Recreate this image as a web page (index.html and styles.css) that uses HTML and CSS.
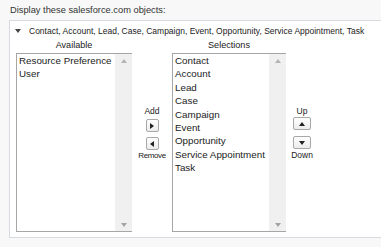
FILE: index.html
```html
<!DOCTYPE html>
<html>
<head>
<meta charset="utf-8">
<link rel="stylesheet" href="styles.css">
</head>
<body>
<div class="title">Display these salesforce.com objects:</div>
<div class="panel">
  <div class="summary"><span class="caret"></span>Contact, Account, Lead, Case, Campaign, Event, Opportunity, Service Appointment, Task</div>
  <div class="picker">
    <div class="colhead head-avail">Available</div>
    <div class="colhead head-sel">Selections</div>
    <div class="list list-avail">
      <div class="items">
        <div>Resource Preference</div>
        <div>User</div>
      </div>
      <div class="sb"><span class="sb-up"></span><span class="sb-down"></span></div>
    </div>
    <div class="mid">
      <div class="lbl">Add</div>
      <div class="btn small"><span class="tri-right"></span></div>
      <div class="btn small gap"><span class="tri-left"></span></div>
      <div class="lbl lbl-remove">Remove</div>
    </div>
    <div class="list list-sel">
      <div class="items">
        <div>Contact</div>
        <div>Account</div>
        <div>Lead</div>
        <div>Case</div>
        <div>Campaign</div>
        <div>Event</div>
        <div>Opportunity</div>
        <div>Service Appointment</div>
        <div>Task</div>
      </div>
      <div class="sb"><span class="sb-up"></span><span class="sb-down"></span></div>
    </div>
    <div class="ord">
      <div class="lbl">Up</div>
      <div class="btn wide"><span class="tri-up"></span></div>
      <div class="btn wide gap2"><span class="tri-down"></span></div>
      <div class="lbl">Down</div>
    </div>
  </div>
</div>
</body>
</html>
```
FILE: styles.css
```css
html, body {
  margin: 0;
  padding: 0;
  background: #f8f8f8;
  font-family: "Liberation Sans", Arial, sans-serif;
  color: #222;
}
.title {
  font-size: 9.3px;
  line-height: 12px;
  padding: 4px 0 0 10px;
  color: #333;
}
.panel {
  margin: 4px 0 0 9px;
  width: 380px;
  background: #fff;
  border: 1px solid #d6d9dd;
  border-right: none;
  padding-bottom: 5px;
}
.summary {
  font-size: 8.5px;
  line-height: 12px;
  margin-top: 4px;
  padding-left: 5px;
  display: flex;
  align-items: center;
  color: #222;
  white-space: nowrap;
}
.caret {
  width: 0;
  height: 0;
  border-left: 3px solid transparent;
  border-right: 3px solid transparent;
  border-top: 4px solid #444;
  margin-right: 8px;
}
.picker {
  display: grid;
  grid-template-columns: 116px 40px 114px 32px;
  grid-template-rows: 12px 179px;
  row-gap: 2px;
  margin: 2px 0 0 6px;
}
.colhead {
  font-size: 9.1px;
  line-height: 12px;
  text-align: center;
  grid-row: 1;
  color: #222;
}
.head-avail { grid-column: 1; }
.head-sel { grid-column: 3; }
.list {
  grid-row: 2;
  display: flex;
  border: 1px solid #a6a6a6;
  border-right: none;
  box-sizing: border-box;
  background: #fff;
}
.list-avail { grid-column: 1; }
.list-sel { grid-column: 3; }
.items {
  flex: 1;
  font-size: 9.8px;
  line-height: 13.4px;
  padding-left: 2px;
  white-space: nowrap;
  overflow: hidden;
  color: #222;
}
.sb {
  width: 17px;
  background: #f0f0f0;
  display: flex;
  flex-direction: column;
  justify-content: space-between;
  align-items: center;
  padding: 5px 0 4px;
}
.sb-up {
  width: 0; height: 0;
  border-left: 3.5px solid transparent;
  border-right: 3.5px solid transparent;
  border-bottom: 4px solid #b4b4b4;
}
.sb-down {
  width: 0; height: 0;
  border-left: 3.5px solid transparent;
  border-right: 3.5px solid transparent;
  border-top: 4px solid #a3a3a3;
}
.mid, .ord {
  grid-row: 2;
  display: flex;
  flex-direction: column;
  align-items: center;
  padding-top: 53px;
}
.mid { grid-column: 2; }
.ord { grid-column: 4; }
.lbl {
  font-size: 8.5px;
  line-height: 10px;
  color: #222;
}
.lbl-remove {
  letter-spacing: -0.4px;
  font-size: 8px;
}
.btn {
  box-sizing: border-box;
  border: 1px solid #a8a8a8;
  border-radius: 2px;
  background: linear-gradient(#ffffff, #ececec);
  display: flex;
  align-items: center;
  justify-content: center;
  margin-top: 3px;
}
.btn.small { width: 13px; height: 13px; }
.btn.wide { width: 18px; height: 13px; margin-top: 1px; }
.btn.gap { margin-top: 5px; margin-bottom: 1px; }
.btn.gap2 { margin-top: 6px; margin-bottom: 1px; }
.tri-right {
  width: 0; height: 0;
  border-top: 3px solid transparent;
  border-bottom: 3px solid transparent;
  border-left: 4px solid #222;
}
.tri-left {
  width: 0; height: 0;
  border-top: 3px solid transparent;
  border-bottom: 3px solid transparent;
  border-right: 4px solid #222;
}
.tri-up {
  width: 0; height: 0;
  border-left: 3.5px solid transparent;
  border-right: 3.5px solid transparent;
  border-bottom: 4px solid #222;
}
.tri-down {
  width: 0; height: 0;
  border-left: 3.5px solid transparent;
  border-right: 3.5px solid transparent;
  border-top: 4px solid #222;
}
```
